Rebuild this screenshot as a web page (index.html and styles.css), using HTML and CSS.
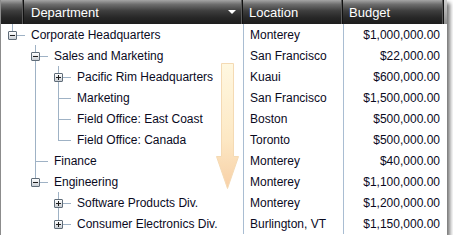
FILE: index.html
```html
<!DOCTYPE html>
<html>
<head>
<meta charset="utf-8">
<link rel="stylesheet" href="styles.css">
</head>
<body>
<div class="grid">
  <div class="header">
    <div class="hcell hc-blank"></div>
    <div class="hcell hc-dept"><span>Department</span><span class="sort"></span></div>
    <div class="hcell hc-loc">Location</div>
    <div class="hcell hc-bud">Budget</div>
    <div class="hcell hc-end"></div>
  </div>
  <div class="rows">
    <div class="row">
      <div class="c-tree"><span class="g g-root"><span class="box minus"></span></span><span class="label">Corporate Headquarters</span></div>
      <div class="c-loc">Monterey</div><div class="c-bud">$1,000,000.00</div>
    </div>
    <div class="row">
      <div class="c-tree"><span class="g"></span><span class="g g-tee"><span class="box minus"></span></span><span class="label">Sales and Marketing</span></div>
      <div class="c-loc">San Francisco</div><div class="c-bud">$22,000.00</div>
    </div>
    <div class="row">
      <div class="c-tree"><span class="g"></span><span class="g g-pass"></span><span class="g g-tee"><span class="box plus"></span></span><span class="label">Pacific Rim Headquarters</span></div>
      <div class="c-loc">Kuaui</div><div class="c-bud">$600,000.00</div>
    </div>
    <div class="row">
      <div class="c-tree"><span class="g"></span><span class="g g-pass"></span><span class="g g-tee"></span><span class="label">Marketing</span></div>
      <div class="c-loc">San Francisco</div><div class="c-bud">$1,500,000.00</div>
    </div>
    <div class="row">
      <div class="c-tree"><span class="g"></span><span class="g g-pass"></span><span class="g g-tee"></span><span class="label">Field Office: East Coast</span></div>
      <div class="c-loc">Boston</div><div class="c-bud">$500,000.00</div>
    </div>
    <div class="row">
      <div class="c-tree"><span class="g"></span><span class="g g-pass"></span><span class="g g-ell"></span><span class="label">Field Office: Canada</span></div>
      <div class="c-loc">Toronto</div><div class="c-bud">$500,000.00</div>
    </div>
    <div class="row">
      <div class="c-tree"><span class="g"></span><span class="g g-tee"></span><span class="label">Finance</span></div>
      <div class="c-loc">Monterey</div><div class="c-bud">$40,000.00</div>
    </div>
    <div class="row">
      <div class="c-tree"><span class="g"></span><span class="g g-ell"><span class="box minus"></span></span><span class="label">Engineering</span></div>
      <div class="c-loc">Monterey</div><div class="c-bud">$1,100,000.00</div>
    </div>
    <div class="row">
      <div class="c-tree"><span class="g"></span><span class="g"></span><span class="g g-tee"><span class="box plus"></span></span><span class="label">Software Products Div.</span></div>
      <div class="c-loc">Monterey</div><div class="c-bud">$1,200,000.00</div>
    </div>
    <div class="row">
      <div class="c-tree"><span class="g"></span><span class="g"></span><span class="g g-ell"><span class="box plus"></span></span><span class="label">Consumer Electronics Div.</span></div>
      <div class="c-loc">Burlington, VT</div><div class="c-bud">$1,150,000.00</div>
    </div>
  </div>
  <svg class="drag-arrow" width="24" height="130" viewBox="0 0 24 130">
    <defs>
      <linearGradient id="ag" x1="0" y1="0" x2="0" y2="1">
        <stop offset="0" stop-color="#fff7dc"/>
        <stop offset="0.6" stop-color="#fde5bb"/>
        <stop offset="1" stop-color="#f7c898"/>
      </linearGradient>
    </defs>
    <path d="M5.5 1.5 H17.5 V94.5 H22.5 L11.5 126.5 L0.5 94.5 H5.5 Z" fill="url(#ag)" stroke="#f3d4a8" stroke-width="1" opacity="0.85"/>
  </svg>
</div>
</body>
</html>
```

FILE: styles.css
```css
html, body {
  margin: 0;
  padding: 0;
  background: #fff;
}
body {
  font-family: "Liberation Sans", Arial, sans-serif;
  font-size: 12px;
  color: #0a0a1e;
}
.grid {
  position: relative;
  width: 447px;
  height: 235px;
  box-sizing: border-box;
  border-left: 1px solid #8c8c8c;
  background: #fff;
  box-shadow: 3px 3px 4px rgba(0, 0, 0, 0.55);
}
.header {
  display: flex;
  height: 24px;
  background: linear-gradient(#a6a6a6 0, #6e6e6e 18%, #3e3e3e 45%, #262626 75%, #1d1d1d 100%);
  color: #fff;
  font-size: 13px;
}
.hcell {
  display: flex;
  align-items: center;
  box-sizing: border-box;
  height: 24px;
  border-right: 1px solid #111;
  box-shadow: inset -1px 0 0 #5a5a5a;
}
.hc-blank { width: 23px; }
.hc-dept { width: 219px; padding-left: 7px; justify-content: space-between; padding-right: 6px; }
.hc-loc { width: 100px; padding-left: 6px; }
.hc-bud { width: 101px; padding-left: 6px; }
.hc-end {
  flex: 1;
  border-right: none;
  box-shadow: none;
  background: linear-gradient(#cfcfcf, #8e8e8e);
}
.sort {
  width: 0;
  height: 0;
  border-left: 4px solid transparent;
  border-right: 4px solid transparent;
  border-top: 4px solid #fff;
}
.rows {
  display: flex;
  flex-direction: column;
}
.row {
  display: flex;
  height: 21px;
}
.c-tree {
  width: 242px;
  display: flex;
  align-items: stretch;
  border-right: 1px solid #a9bdd2;
  white-space: nowrap;
}
.c-loc {
  width: 93px;
  padding-left: 6px;
  border-right: 1px solid #a9bdd2;
  display: flex;
  align-items: center;
  white-space: nowrap;
}
.c-bud {
  width: 96px;
  padding-right: 6px;
  display: flex;
  align-items: center;
  justify-content: flex-end;
  white-space: nowrap;
}
.label {
  display: flex;
  align-items: center;
  padding-left: 7px;
}
.g {
  position: relative;
  width: 23px;
  flex: none;
}
.g-pass::before,
.g-tee::before,
.g-ell::before,
.g-root::before {
  content: "";
  position: absolute;
  left: 11px;
  top: 0;
  width: 1px;
  height: 21px;
  background: #9fb2c5;
}
.g-ell::before { height: 12px; }
.g-root::before { height: 7px; }
.g-tee::after,
.g-ell::after,
.g-root::after {
  content: "";
  position: absolute;
  left: 11px;
  top: 11px;
  width: 13px;
  height: 1px;
  background: #9fb2c5;
}
.box {
  position: absolute;
  left: 7px;
  top: 7px;
  width: 7px;
  height: 7px;
  border: 1px solid #5f6c78;
  border-radius: 1px;
  background: linear-gradient(#ffffff, #c9ced4);
  z-index: 1;
}
.box::before {
  content: "";
  position: absolute;
  left: 1px;
  top: 3px;
  width: 5px;
  height: 1px;
  background: #1e1e1e;
}
.plus::after {
  content: "";
  position: absolute;
  left: 3px;
  top: 1px;
  width: 1px;
  height: 5px;
  background: #1e1e1e;
}
.drag-arrow {
  position: absolute;
  left: 215px;
  top: 62px;
}
```
